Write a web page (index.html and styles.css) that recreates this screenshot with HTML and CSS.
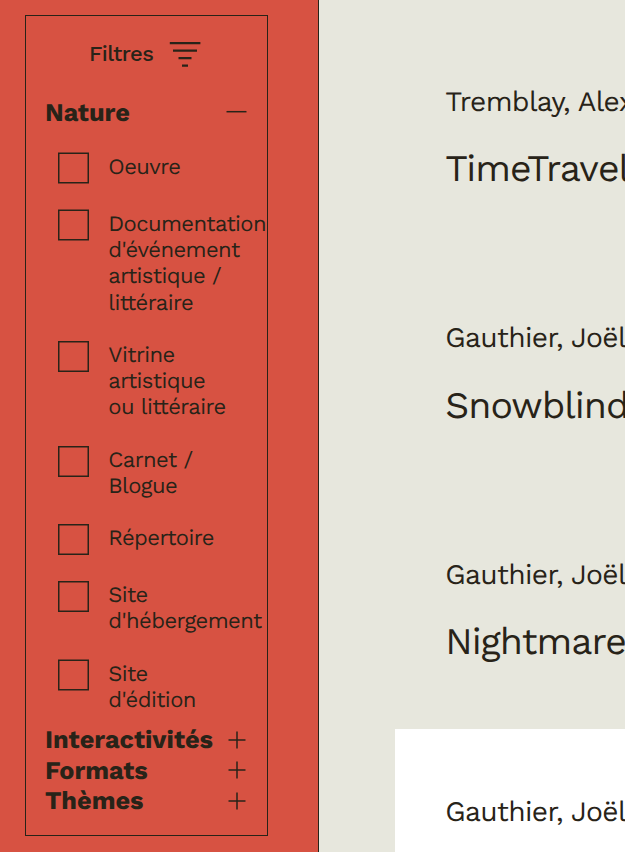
FILE: index.html
```html
<!DOCTYPE html>
<html lang="fr">
<head>
<meta charset="utf-8">
<title>Répertoire</title>
<link rel="stylesheet" href="styles.css">
</head>
<body>
<div class="page">
  <aside class="sidebar">
    <div class="panel">
      <button class="filters-toggle" type="button">
        <span>Filtres</span>
        <svg class="filters-icon" width="32" height="26" viewBox="0 0 32 26"><path d="M.8 2.2h30.6M4 9.7h24M9.5 17.2h13M13 24.7h6"/></svg>
      </button>
      <h2 class="group group-open"><span>Nature</span>
        <svg class="minus" width="21" height="20" viewBox="0 0 21 20"><path d="M.5 9.7h20"/></svg></h2>
      <ul class="options">
        <li class="option"><svg class="box" width="31" height="32"><rect x=".75" y="1.25" width="29.5" height="29.5"/></svg><span class="label">Oeuvre</span></li>
        <li class="option"><svg class="box" width="31" height="32"><rect x=".75" y="1.25" width="29.5" height="29.5"/></svg><span class="label">Documentation<br>d'événement<br>artistique /<br>littéraire</span></li>
        <li class="option"><svg class="box" width="31" height="32"><rect x=".75" y="1.75" width="29.5" height="29.5"/></svg><span class="label">Vitrine<br>artistique<br>ou littéraire</span></li>
        <li class="option"><svg class="box" width="31" height="32"><rect x=".75" y="1.75" width="29.5" height="29.5"/></svg><span class="label">Carnet /<br>Blogue</span></li>
        <li class="option"><svg class="box" width="31" height="32"><rect x=".75" y=".75" width="29.5" height="29.5"/></svg><span class="label">Répertoire</span></li>
        <li class="option"><svg class="box" width="31" height="32"><rect x=".75" y=".75" width="29.5" height="29.5"/></svg><span class="label">Site<br>d'hébergement</span></li>
        <li class="option"><svg class="box" width="31" height="32"><rect x=".75" y="1.25" width="29.5" height="29.5"/></svg><span class="label">Site<br>d'édition</span></li>
      </ul>
      <h2 class="group"><span>Interactivités</span>
        <svg class="plus" width="18" height="18" viewBox="0 0 18 18"><path d="M.5 9h17M9 .5v17"/></svg></h2>
      <h2 class="group"><span>Formats</span>
        <svg class="plus" width="18" height="18" viewBox="0 0 18 18"><path d="M.5 9h17M9 .5v17"/></svg></h2>
      <h2 class="group"><span>Thèmes</span>
        <svg class="plus" width="18" height="18" viewBox="0 0 18 18"><path d="M.5 9h17M9 .5v17"/></svg></h2>
    </div>
  </aside>
  <main class="results">
    <article class="work"><p class="author">Tremblay, Alex</p><h3 class="title">TimeTravel</h3></article>
    <article class="work"><p class="author">Gauthier, Joël</p><h3 class="title">Snowblind</h3></article>
    <article class="work"><p class="author">Gauthier, Joël</p><h3 class="title">Nightmare</h3></article>
    <article class="work work-active"><p class="author">Gauthier, Joël</p></article>
  </main>
</div>
</body>
</html>
```
FILE: styles.css
```css
* { box-sizing: border-box; }
body { margin: 0; background: #e7e7dd; color: #282318; font-family: "Work Sans", Inter, sans-serif; overflow: hidden; text-rendering: geometricPrecision; }
h2, h3, p, ul { margin: 0; padding: 0; }
.page { display: flex; height: 852px; overflow: hidden; }
.sidebar { flex: none; width: 319px; padding: 15px 0 0 25px; background: #d75242; border-right: 1px solid #282318; }
.panel { width: 243px; height: 821px; border: 1px solid #282318; padding: 25px 20px 0 19px; }
svg { fill: none; stroke: #282318; flex: none; }
.filters-toggle { display: flex; align-items: center; gap: 16px; margin: 0 0 0 44px; padding: 0; border: 0; background: none; color: inherit; font: 500 22px/26px "Work Sans", Inter, sans-serif; letter-spacing: -.6px; }
.filters-icon { stroke-width: 2.3; margin-top: -1px; }
.group { display: flex; align-items: center; justify-content: space-between; height: 30.4px; font-size: 25.3px; font-weight: 700; line-height: 30.4px; }
.group span { padding-top: 2px; }
.group-open { margin-top: 30px; }
.minus, .plus { stroke-width: 1.5; }
.plus { margin-right: 1.5px; margin-top: .6px; }
.options { list-style: none; margin: 25px 0 12.4px 13px; display: flex; flex-direction: column; gap: 26px; }
.option { display: flex; gap: 19.3px; min-height: 31px; }
.box { stroke-width: 1.5; margin-bottom: -1px; }
.label { font-size: 22px; letter-spacing: -.58px; line-height: 26.27px; padding-top: 2.4px; margin-bottom: -2.4px; white-space: nowrap; }
.results { flex: 1; min-width: 0; padding: 19px 0 0 76px; overflow: hidden; }
.work { height: 236.7px; padding: 64.5px 0 0 50.3px; white-space: nowrap; }
.author { font-size: 28.2px; letter-spacing: -.67px; line-height: 36px; }
.title { margin-top: 22.5px; font-size: 37.5px; letter-spacing: -.98px; font-weight: 400; line-height: 54px; }
.work-active { background: #fff; }
```
